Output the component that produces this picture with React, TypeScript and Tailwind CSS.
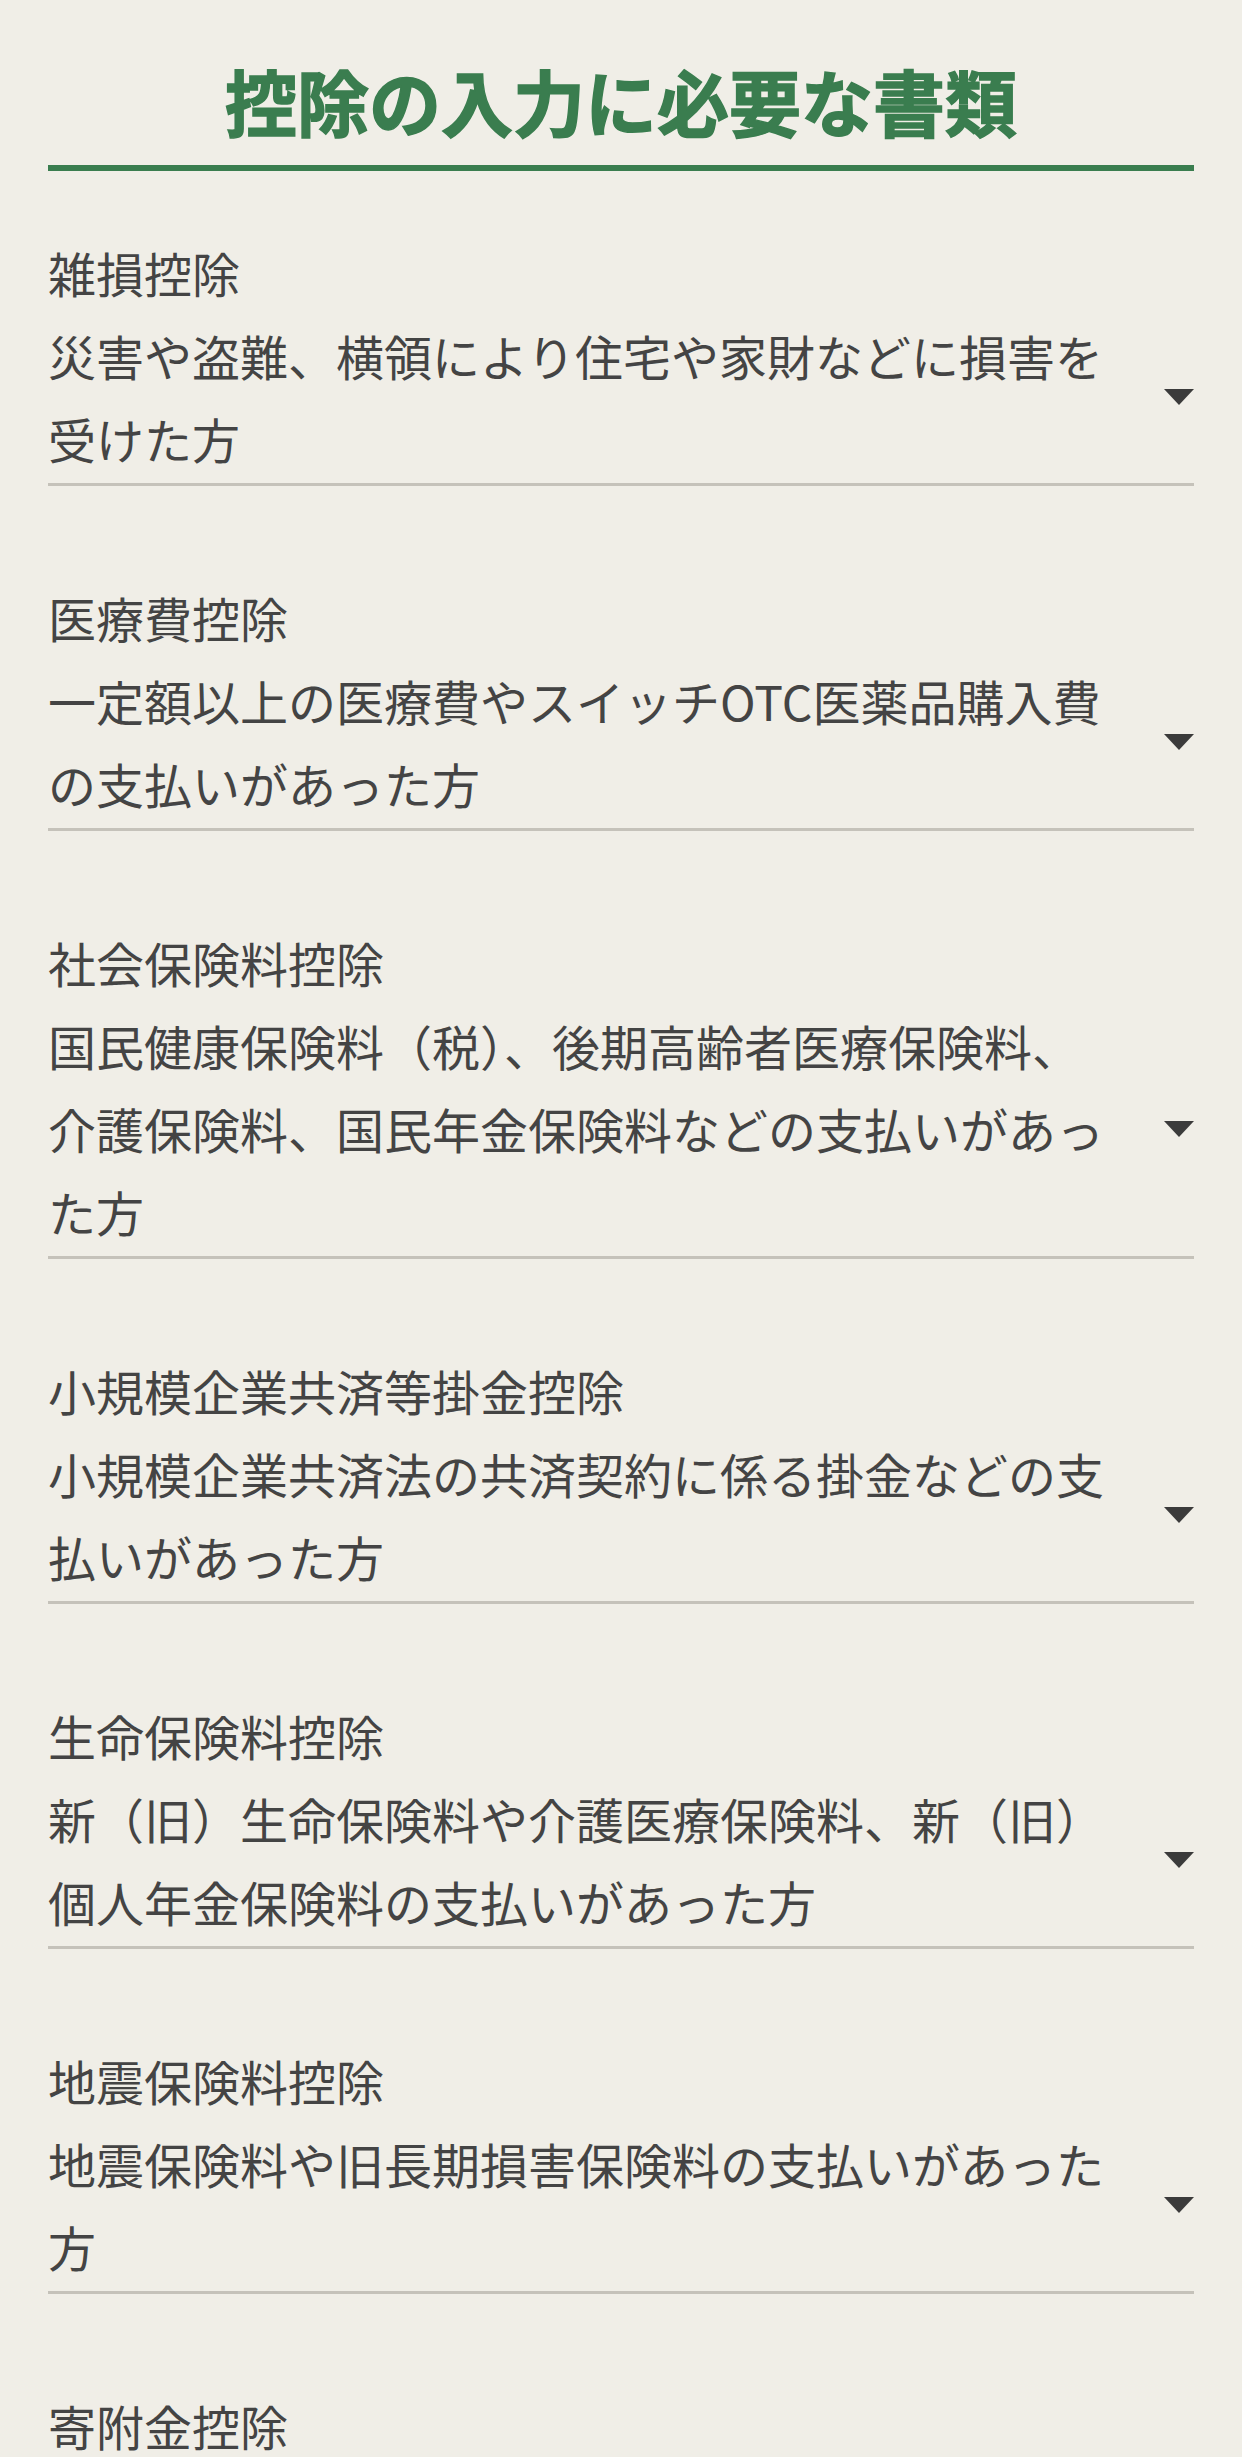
const deductions = [
  {
    name: "雑損控除",
    desc: "災害や盗難、横領により住宅や家財などに損害を受けた方",
  },
  {
    name: "医療費控除",
    desc: "一定額以上の医療費やスイッチOTC医薬品購入費の支払いがあった方",
  },
  {
    name: "社会保険料控除",
    desc: "国民健康保険料（税）、後期高齢者医療保険料、介護保険料、国民年金保険料などの支払いがあった方",
  },
  {
    name: "小規模企業共済等掛金控除",
    desc: "小規模企業共済法の共済契約に係る掛金などの支払いがあった方",
  },
  {
    name: "生命保険料控除",
    desc: "新（旧）生命保険料や介護医療保険料、新（旧）個人年金保険料の支払いがあった方",
  },
  {
    name: "地震保険料控除",
    desc: "地震保険料や旧長期損害保険料の支払いがあった方",
  },
];

function Caret() {
  return (
    <svg width="30" height="16" viewBox="0 0 30 16" className="shrink-0">
      <polygon points="0,0 30,0 15,16" fill="#3b3b3b" />
    </svg>
  );
}

export default function App() {
  return (
    <div
      className="min-h-screen bg-[#f0eee7] px-12 pt-[50px] text-[#444444]"
      style={{ fontFamily: '"Noto Sans CJK JP", "Noto Sans", sans-serif' }}
    >
      <h1 className="border-b-[6px] border-[#3a7d4f] pb-[15px] text-center text-[72px] font-bold leading-[100px] text-[#3a7d4f] [-webkit-text-stroke:1.5px_#3a7d4f]">
        控除の入力に必要な書類
      </h1>

      <ul className="mt-[60px] space-y-[90px]">
        {deductions.map((d) => (
          <li key={d.name} className="border-b-[3px] border-[#c5c2ba] pb-[3px]">
            <p className="text-[48px] leading-[83px]">{d.name}</p>
            <div className="flex items-center gap-[40px]">
              <p className="flex-1 text-[48px] leading-[83px]">{d.desc}</p>
              <Caret />
            </div>
          </li>
        ))}
        {/* last entry is only partly on screen */}
        <li>
          <p className="text-[48px] leading-[83px]">寄附金控除</p>
        </li>
      </ul>
    </div>
  );
}
